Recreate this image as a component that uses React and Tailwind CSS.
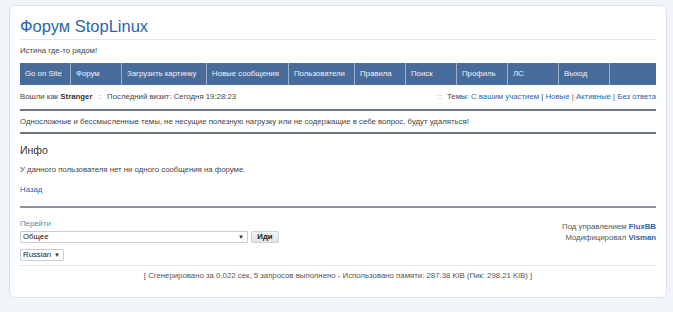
import { useState } from "react";

const navItems = [
    { label: "Go on Site", w: "w-[51px]" },
    { label: "Форум", w: "w-[51px]" },
    { label: "Загрузить картинку", w: "w-[85px]" },
    { label: "Новые сообщения", w: "w-[82px]" },
    { label: "Пользователи", w: "w-[66px]" },
    { label: "Правила", w: "w-[51px]" },
    { label: "Поиск", w: "w-[51px]" },
    { label: "Профиль", w: "w-[51px]" },
    { label: "ЛС", w: "w-[51px]" },
    { label: "Выход", w: "w-[51px]" },
];

function Arrow() {
    return <span className="text-[6px] text-[#333] leading-none">▼</span>;
}

export default function App() {
    const [forum] = useState("Общее");

    return (
        <div className="w-[673px] h-[312px] bg-[#f1f4f8] pt-[5px] pl-[9px] pr-[6px] font-['Liberation_Sans',Arial,sans-serif] text-[7.8px] text-[#444]">
            <div className="bg-white border border-[#dde3ea] rounded-[6px] px-[10px] pb-[15px]">
                {/* header */}
                <div className="pt-[10px] pb-[3px] border-b border-[#e2e8ee]">
                    <h1 className="text-[16.5px] leading-[20px] text-[#2a65ae]">
                        Форум StopLinux
                    </h1>
                </div>
                <p className="mt-[5px] leading-[12px] text-[#444]">Истина где-то рядом!</p>

                {/* menu */}
                <div className="mt-[6px] flex h-[22px] bg-[#476b9b] text-[#eef2f8]">
                    {navItems.map((item) => (
                        <div key={item.label} className={`${item.w} border-r border-[#9bb0ca] flex items-center pl-[5px] whitespace-nowrap`}>
                            {item.label}
                        </div>
                    ))}
                    <div className="flex-1" />
                </div>

                {/* status */}
                <div className="pt-[6px] pb-[6px] flex justify-between leading-[12px] border-b-2 border-[#6f7782]">
                    <div>
                        Вошли как <b className="text-[#333]">Stranger</b> <span className="text-[#999] mx-[3px]">::</span> Последний визит: Сегодня 19:28:23
                    </div>
                    <div>
                        <span className="text-[#999] mr-[3px]">::</span> Темы: <a className="text-[#2a65ae]">С вашим участием</a> | <a className="text-[#2a65ae]">Новые</a> | <a className="text-[#2a65ae]">Активные</a> | <a className="text-[#2a65ae]">Без ответа</a>
                    </div>
                </div>

                {/* announcement */}
                <div className="pt-[5px] pb-[4px] leading-[12px] border-b-2 border-[#6f7782]">
                    Односложные и бессмысленные темы, не несущие полезную нагрузку или не содержащие в себе вопрос, будут удаляться!
                </div>

                {/* info */}
                <h2 className="mt-[8px] text-[10.5px] leading-[16px] text-[#333]">Инфо</h2>
                <p className="mt-[6px] leading-[12px]">У данного пользователя нет ни одного сообщения на форуме.</p>
                <p className="mt-[8px] leading-[12px]"><a className="text-[#2a65ae]">Назад</a></p>

                {/* footer */}
                <div className="mt-[10px] border-t-2 border-[#8b929c]" />
                <div className="flex justify-between">
                    <div>
                        <p className="mt-[10px] leading-[12px] text-[#5b87ad]">Перейти</p>
                        <div className="mt-[1px] flex items-center gap-[3px]">
                            <div className="w-[228px] h-[12px] border border-[#c9ced4] rounded-[1px] flex items-center justify-between pl-[2px] pr-[3px] text-[#222] bg-white">
                                <span>{forum}</span>
                                <Arrow />
                            </div>
                            <div className="w-[28px] h-[12px] border border-[#d2d5d8] bg-gradient-to-b from-[#f4f4f4] to-[#e2e2e2] flex items-center justify-center font-bold text-[#222] rounded-[1px]">
                                Иди
                            </div>
                        </div>
                        <div className="mt-[6px] w-[44px] h-[12px] border border-[#c9ced4] rounded-[1px] flex items-center justify-between pl-[2px] pr-[3px] text-[#222]">
                            <span>Russian</span>
                            <Arrow />
                        </div>
                    </div>
                    <div className="pt-[13px] text-right leading-[11px] text-[#555]">
                        <p>Под управлением <b className="text-[#2a65ae]">FluxBB</b></p>
                        <p>Модифицировал <b className="text-[#2a65ae]">Visman</b></p>
                    </div>
                </div>
                <div className="mt-[4px] border-t border-[#e6eaee]" />
                <p className="mt-[4px] leading-[12px] text-center text-[#555]">
                    [ Сгенерировано за 0.022 сек, 5 запросов выполнено - Использовано памяти: 287.38 KiB (Пик: 298.21 KiB) ]
                </p>
            </div>
        </div>
    );
}
